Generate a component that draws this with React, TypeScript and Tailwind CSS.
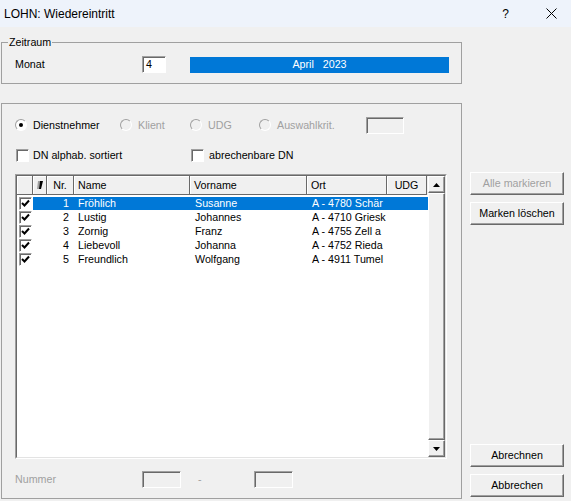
import React from 'react';

type Row = { nr: number; name: string; vorname: string; ort: string };

// Ort column is only as wide as the visible part in the original dialog
const rows: Row[] = [
  { nr: 1, name: 'Fröhlich', vorname: 'Susanne', ort: 'A - 4780 Schär' },
  { nr: 2, name: 'Lustig', vorname: 'Johannes', ort: 'A - 4710 Griesk' },
  { nr: 3, name: 'Zornig', vorname: 'Franz', ort: 'A - 4755 Zell a' },
  { nr: 4, name: 'Liebevoll', vorname: 'Johanna', ort: 'A - 4752 Rieda' },
  { nr: 5, name: 'Freundlich', vorname: 'Wolfgang', ort: 'A - 4911 Tumel' },
];

// classic win32 3d edges
const raised =
  'border border-t-white border-l-white border-r-[#696969] border-b-[#696969] shadow-[inset_-1px_-1px_0_#a0a0a0] bg-[#f0f0f0]';
const sunken =
  'border border-t-[#a0a0a0] border-l-[#a0a0a0] border-r-white border-b-white shadow-[inset_1px_1px_0_#696969]';

const Check = () => (
  <svg width="11" height="11" viewBox="0 0 11 11">
    <polyline points="2,5 4.5,7.5 9,2.5" fill="none" stroke="#000" strokeWidth="2" />
  </svg>
);

const CheckBox = ({ checked }: { checked?: boolean }) => (
  <span className={`flex h-[13px] w-[13px] shrink-0 items-center justify-center bg-white ${sunken}`}>
    {checked && <Check />}
  </span>
);

const Radio = ({ checked, disabled }: { checked?: boolean; disabled?: boolean }) => (
  <span
    className={`flex h-[12px] w-[12px] shrink-0 items-center justify-center rounded-full border border-t-[#a0a0a0] border-l-[#a0a0a0] border-r-white border-b-white ${
      disabled ? 'bg-[#f0f0f0]' : 'bg-white'
    }`}
  >
    {checked && <span className="h-[4px] w-[4px] rounded-full bg-black" />}
  </span>
);

const Button = ({ label, disabled }: { label: string; disabled?: boolean }) => (
  <div
    className={`flex h-[23px] w-[94px] items-center justify-center ${raised} ${
      disabled ? 'text-[#a0a0a0]' : 'text-black'
    }`}
  >
    {label}
  </div>
);

const HeadCell = ({ w, children, center }: { w: string; children?: React.ReactNode; center?: boolean }) => (
  <div
    className={`flex h-full shrink-0 items-center border-r border-b border-r-[#696969] border-b-[#696969] shadow-[inset_1px_1px_0_#fff] ${w} ${
      center ? 'justify-center' : 'pl-[4px]'
    }`}
  >
    {children}
  </div>
);

const ScrollBtn = ({ up }: { up?: boolean }) => (
  <div className={`flex h-[17px] items-center justify-center ${raised}`}>
    <svg width="7" height="4" viewBox="0 0 7 4">
      <polygon points={up ? '3.5,0 7,4 0,4' : '0,0 7,0 3.5,4'} fill="#000" />
    </svg>
  </div>
);

export default function App() {
  return (
    <div className="h-[501px] w-[571px] overflow-hidden bg-[#f0f0f0] font-['Liberation_Sans',Arial,sans-serif] text-[10.7px] text-black">
      {/* Title bar */}
      <div className="flex h-[27px] items-center bg-[#eef3fb] pl-[4px] text-[12px]">
        <span>LOHN: Wiedereintritt</span>
        <span className="ml-auto">?</span>
        <svg className="mr-[14px] ml-[37px]" width="11" height="11" viewBox="0 0 11 11">
          <path d="M0.5 0.5 L10.5 10.5 M10.5 0.5 L0.5 10.5" stroke="#000" strokeWidth="1" />
        </svg>
      </div>

      <div className="pl-[1px]">
        {/* Zeitraum */}
        <fieldset className="mt-[9px] h-[48px] w-[461px] border border-[#a0a0a0]">
          <legend className="ml-[6px] px-[1px] leading-[12px]">Zeitraum</legend>
          <div className="mt-[8px] flex h-[17px] items-center pl-[13px]">
            <span className="w-[127px]">Monat</span>
            <div className={`flex h-[17px] w-[24px] items-center bg-white pl-[3px] ${sunken}`}>4</div>
            <div className="ml-[24px] flex h-[16px] w-[259px] items-center justify-center bg-[#0078d7] text-white">
              April&nbsp;&nbsp;&nbsp;2023
            </div>
          </div>
        </fieldset>

        <div className="mt-[19px] flex">
          {/* Main group */}
          <div className="flex h-[396px] w-[461px] flex-col border border-[#a0a0a0] pt-[13px] pl-[13px]">
            <div className="flex h-[17px] items-center">
              <div className="flex w-[105px] items-center gap-[6px]">
                <Radio checked />
                <span>Dienstnehmer</span>
              </div>
              <div className="flex w-[70px] items-center gap-[6px] text-[#a0a0a0]">
                <Radio disabled />
                <span>Klient</span>
              </div>
              <div className="flex w-[69px] items-center gap-[6px] text-[#a0a0a0]">
                <Radio disabled />
                <span>UDG</span>
              </div>
              <div className="flex w-[107px] items-center gap-[6px] text-[#a0a0a0]">
                <Radio disabled />
                <span>Auswahlkrit.</span>
              </div>
              <div className={`h-[17px] w-[38px] bg-[#f0f0f0] ${sunken}`} />
            </div>

            <div className="mt-[15px] flex h-[13px] items-center">
              <div className="ml-[1px] flex w-[175px] items-center gap-[4px]">
                <CheckBox />
                <span>DN alphab. sortiert</span>
              </div>
              <div className="flex items-center gap-[5px]">
                <CheckBox />
                <span>abrechenbare DN</span>
              </div>
            </div>

            {/* List */}
            <div className="mt-[12px] h-[285px] w-[432px] border border-[#a0a0a0] border-r-white border-b-white">
              <div className="flex h-full border border-[#696969] border-r-[#e3e3e3] border-b-[#e3e3e3] bg-white">
                <div className="flex w-[411px] flex-col">
                  <div className="flex h-[19px] bg-[#f0f0f0]">
                    <HeadCell w="w-[16px]" />
                    <HeadCell w="w-[14px]" center>
                      <svg width="6" height="8" viewBox="0 0 6 8">
                        <polygon points="1,0 3,0 2,8 0,8" fill="#a0a0a0" />
                        <polygon points="3,0 6,0 4,8 2,8" fill="#000" />
                      </svg>
                    </HeadCell>
                    <HeadCell w="w-[27px]" center>
                      Nr.
                    </HeadCell>
                    <HeadCell w="w-[116px]">Name</HeadCell>
                    <HeadCell w="w-[117px]">Vorname</HeadCell>
                    <HeadCell w="w-[80px]">Ort</HeadCell>
                    <HeadCell w="w-[40px]" center>
                      UDG
                    </HeadCell>
                  </div>
                  <div className="flex flex-col pt-[1px]">
                    {rows.map((r) => (
                      <div key={r.nr} className="flex h-[14px] items-center">
                        <div className="flex w-[16px] shrink-0 pl-[2px]">
                          <CheckBox checked />
                        </div>
                        <div
                          className={`flex h-[13px] flex-1 items-center whitespace-nowrap ${
                            r.nr === 1 ? 'bg-[#0078d7] text-white' : ''
                          }`}
                        >
                          <span className="w-[14px] shrink-0" />
                          <span className="w-[27px] shrink-0 pr-[5px] text-right">{r.nr}</span>
                          <span className="w-[116px] shrink-0 overflow-hidden pl-[4px]">{r.name}</span>
                          <span className="w-[117px] shrink-0 overflow-hidden pl-[5px]">{r.vorname}</span>
                          <span className="w-[80px] shrink-0 pl-[5px]">{r.ort}</span>
                        </div>
                      </div>
                    ))}
                  </div>
                </div>
                {/* Scrollbar */}
                <div className="flex w-[17px] flex-col">
                  <ScrollBtn up />
                  <div className={`flex-1 ${raised}`} />
                  <ScrollBtn />
                </div>
              </div>
            </div>

            <div className="mt-[12px] flex h-[17px] items-center text-[#a0a0a0]">
              <span className="w-[127px]">Nummer</span>
              <div className={`h-[17px] w-[39px] bg-[#f0f0f0] ${sunken}`} />
              <span className="w-[73px] pl-[17px]">-</span>
              <div className={`h-[17px] w-[39px] bg-[#f0f0f0] ${sunken}`} />
            </div>
          </div>

          {/* Right buttons */}
          <div className="ml-[8px] flex w-[94px] flex-col gap-[7px] pt-[69px] pb-[2px]">
            <Button label="Alle markieren" disabled />
            <Button label="Marken löschen" />
            <div className="mt-auto">
              <Button label="Abrechnen" />
            </div>
            <Button label="Abbrechen" />
          </div>
        </div>
      </div>
    </div>
  );
}
